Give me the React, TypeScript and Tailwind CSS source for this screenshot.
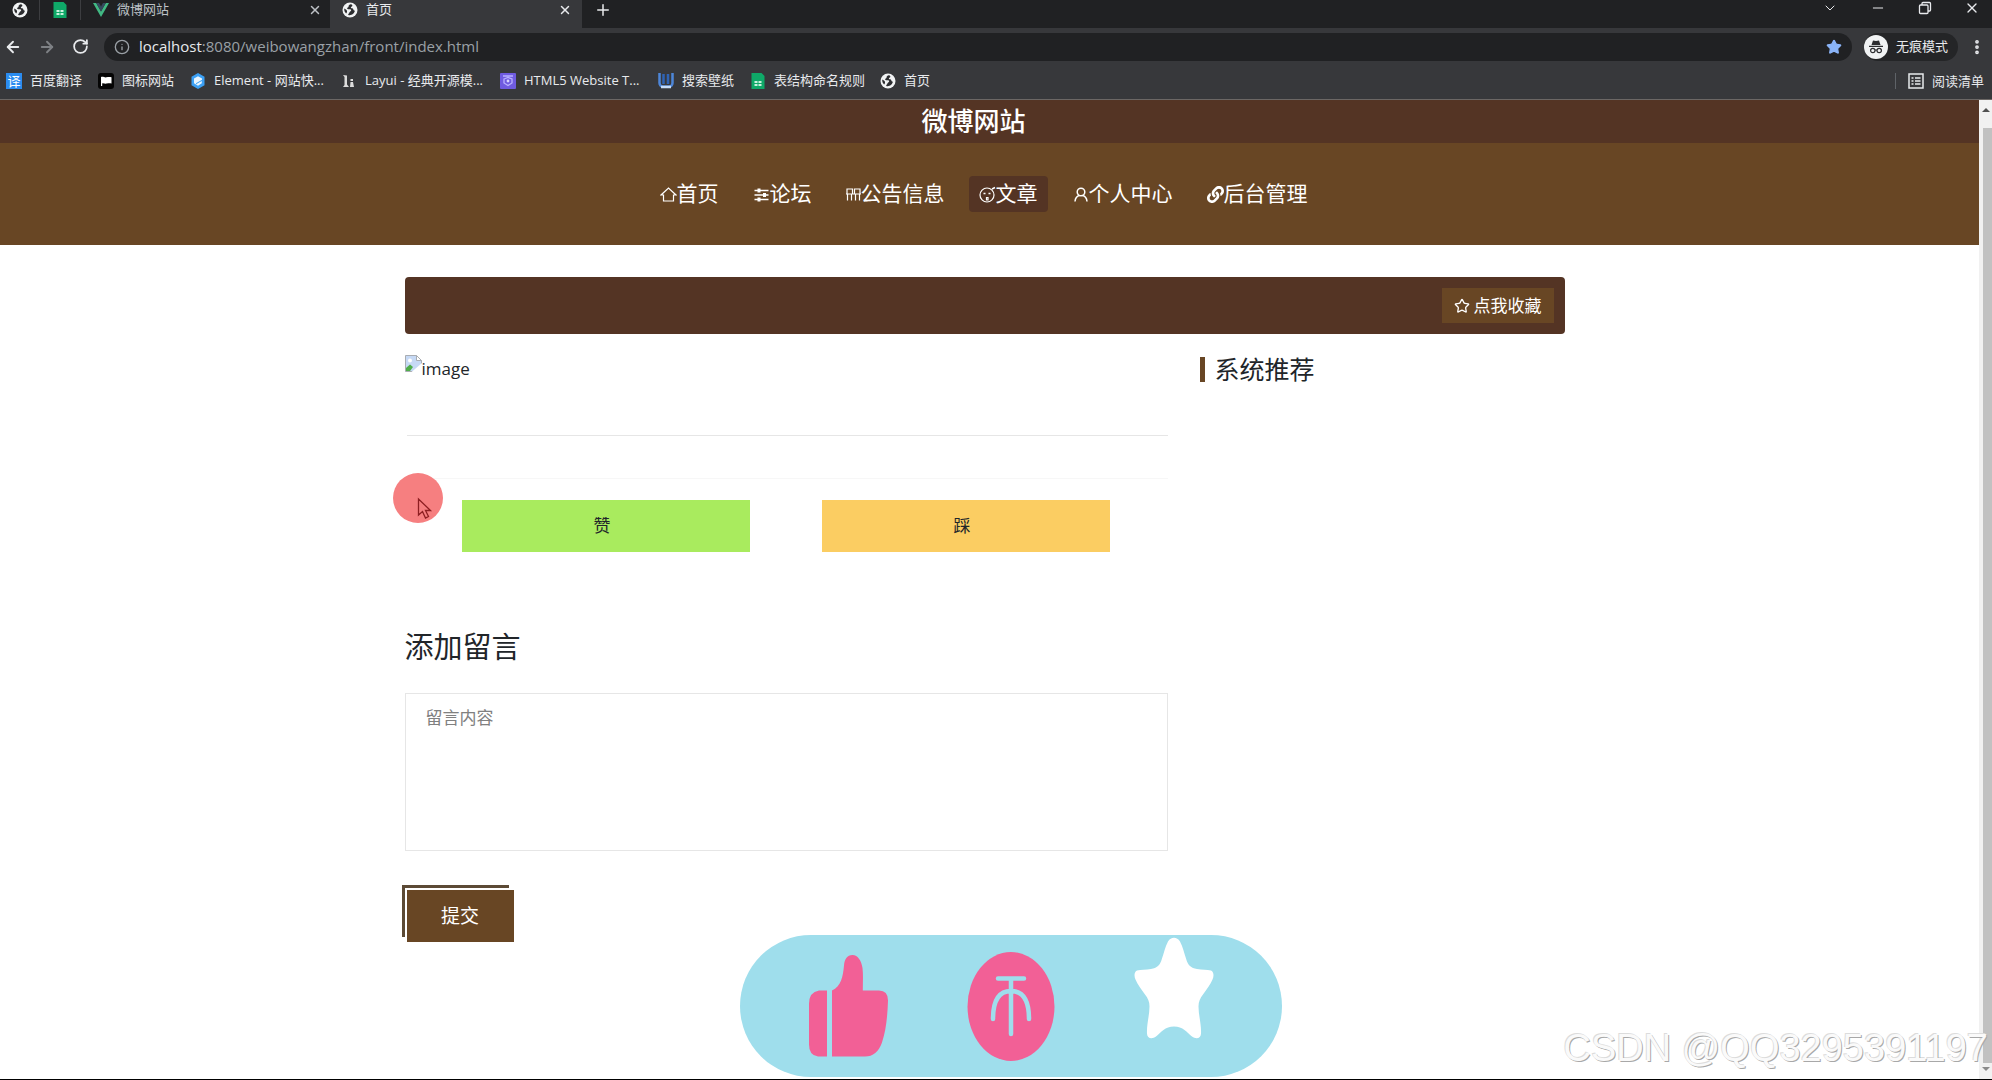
import type { ReactNode } from "react";
import {
  ArrowLeft,
  ArrowRight,
  ChevronDown,
  Info,
  Minus,
  MoreVertical,
  Plus,
  RotateCw,
  Star,
  X,
} from "lucide-react";
import { FaLink } from "react-icons/fa";

function GlobeIcon() {
  return (
    <svg viewBox="0 0 16 16" className="w-4 h-4 shrink-0">
      <circle cx="8" cy="8" r="7.5" fill="#f1f3f4" />
      <path d="M9 2.200c-1.800.3-2.600 1.300-2.400 2.200.2.800-1.600.9-1.500 2 .1 1 1.900.6 3.200.9 1.500.4.9 1.700-.1 2.100-.9.4-.7 1.500-1.600 2.300-.5.400-.7 1.300.300 1.500 2.700.400 5.700-1.700 6-4.600-1.100.2-1.600-.7-1.700-1.500-.2-1-1.900-.4-2.300-1.300-.3-.900 1-1.300 1.400-1.900.3-.6-.3-1.500-1.300-1.700z" fill="#2b2c2f" />
      <path d="M2.300 6.600c1 .8 2.400 1.200 2.700 2.300.2 1-.3 1.900-.9 2.500C2.600 10.300 2 8.400 2.300 6.600z" fill="#2b2c2f" />
    </svg>
  );
}

function SheetIcon() {
  return (
    <svg viewBox="0 0 16 16" className="w-4 h-4 shrink-0">
      <path d="M1.500 0h10l3 3v13h-13z" fill="#0fa968" />
      <path d="M4.500 8h3v2h-3zM8.500 8h3v2h-3zM4.500 11h3v2h-3zM8.500 11h3v2h-3z" fill="#c9f2de" />
    </svg>
  );
}

function VueIcon() {
  return (
    <svg viewBox="0 0 16 16" className="w-4 h-4 shrink-0">
      <path d="M0 1h3.200L8 9.500 12.800 1H16L8 15z" fill="#41b883" />
      <path d="M3.200 1H6l2 3.500L10 1h2.800L8 9.500z" fill="#35495e" />
    </svg>
  );
}

function TranslateIcon() {
  return (
    <span className="w-4 h-4 shrink-0 bg-[#2b8cf0] text-white text-[13px] leading-4 text-center">译</span>
  );
}

function FlagIcon() {
  return (
    <svg viewBox="0 0 16 16" className="w-4 h-4 shrink-0">
      <rect width="16" height="16" rx="3" fill="#050505" />
      <path d="M3 4c2-1 3.500.8 5.500.3 1.500-.4 3-.6 5-.1v6.300c-2-.5-3.200-.3-4.700.1-2 .5-3-.6-4.600-.2V13H3z" fill="#fff" />
    </svg>
  );
}

function ElementIcon() {
  return (
    <svg viewBox="0 0 16 16" className="w-4 h-4 shrink-0">
      <path d="M8 0l6.500 3.700v8.600L8 16l-6.500-3.700V3.700z" fill="#3ba0f5" />
      <path d="M8 3.200l4 2.300v1.300L6 10.300v1L11.800 8v2.300L8 12.700l-4-2.400V5.500z" fill="#e8f5ff" />
    </svg>
  );
}

function LayuiIcon() {
  return (
    <svg viewBox="0 0 16 16" className="w-4 h-4 shrink-0">
      <path d="M2 2l4 .5v9l2 2.500H2l1.500-2V4zM9.500 6H12v2H9.500zM9.500 9H12l1 5H9z" fill="#dcdcdc" />
    </svg>
  );
}

function TemplateIcon() {
  return (
    <svg viewBox="0 0 16 16" className="w-4 h-4 shrink-0">
      <rect width="16" height="16" rx="1" fill="#6f5be0" />
      <path d="M3 3h10M4 6l4-1.500L12 6v4l-4 2.500L4 10z" fill="none" stroke="#b9b2ff" strokeWidth="1.300" />
      <circle cx="8" cy="8" r="1.400" fill="#d9d5ff" />
    </svg>
  );
}

function WallpaperIcon() {
  return (
    <svg viewBox="0 0 16 16" className="w-4 h-4 shrink-0" fill="none" strokeWidth="2.500">
      <path d="M1.500 0v10c0 2 1.500 3.500 3.500 3.500h6c2 0 3.500-1.500 3.500-3.500V0" stroke="#4d86d9" />
      <path d="M5.500 1v10M10 1v10" stroke="#2f63b5" />
      <path d="M3 14h10" stroke="#c5dcf8" />
    </svg>
  );
}

function ReadingListIcon() {
  return (
    <svg viewBox="0 0 16 16" className="w-4 h-4 shrink-0" fill="none" stroke="#e8eaed">
      <rect x="1" y="1" width="14" height="14" strokeWidth="1.500" />
      <path d="M3.500 5h2M3.500 8h2M3.500 11h2M7 5h5.500M7 8h5.500M7 11h5.500" strokeWidth="1.500" />
    </svg>
  );
}

function RestoreIcon() {
  return (
    <svg viewBox="0 0 14 14" className="w-3.5 h-3.5" fill="none" stroke="currentColor" strokeWidth="1.300">
      <rect x="1.500" y="4" width="8.500" height="8.500" rx="1" />
      <path d="M4 4V2.500q0-1 1-1h6.500q1 0 1 1V9q0 1-1 1H10" />
    </svg>
  );
}

function IncognitoIcon() {
  return (
    <svg viewBox="0 0 24 24" className="w-6 h-6 shrink-0">
      <circle cx="12" cy="12" r="12" fill="#f1f3f4" />
      <path d="M9 5.500l3 .6 3-.6 1.500 4.500h-9zM5 10.800h14v1.200H5z" fill="#2b2c2f" />
      <circle cx="8.800" cy="15.500" r="2.200" fill="none" stroke="#2b2c2f" strokeWidth="1.200" />
      <circle cx="15.200" cy="15.500" r="2.200" fill="none" stroke="#2b2c2f" strokeWidth="1.200" />
      <path d="M11 15.200q1-.6 2 0" fill="none" stroke="#2b2c2f" />
    </svg>
  );
}

function NavGlyph({ children }: { children: ReactNode }) {
  return (
    <svg viewBox="0 0 17 17" className="h-[17px] w-[17px] shrink-0" fill="none" stroke="currentColor" strokeWidth="1.200">
      {children}
    </svg>
  );
}

const bookmarks = [
  { label: "百度翻译", icon: <TranslateIcon />, width: "w-[92px]" },
  { label: "图标网站", icon: <FlagIcon />, width: "w-[92px]" },
  { label: "Element - 网站快...", icon: <ElementIcon />, width: "w-[151px]" },
  { label: "Layui - 经典开源模...", icon: <LayuiIcon />, width: "w-[159px]" },
  { label: "HTML5 Website T...", icon: <TemplateIcon />, width: "w-[158px]" },
  { label: "搜索壁纸", icon: <WallpaperIcon />, width: "w-[92px]" },
  { label: "表结构命名规则", icon: <SheetIcon />, width: "w-[130px]" },
  { label: "首页", icon: <GlobeIcon />, width: "w-[60px]" },
];

const navItems = [
  {
    label: "首页",
    icon: (
      <NavGlyph>
        <path d="M1 9l7.500-7L16 9h-2.500v6h-10V9z" />
      </NavGlyph>
    ),
  },
  {
    label: "论坛",
    icon: (
      <NavGlyph>
        <path d="M1.500 4.500h14M1.500 9h14M1.500 13.500h14" strokeWidth="1.500" />
        <path d="M6 2.500v4M11.500 7v4M6 11.500v4" strokeWidth="3" />
      </NavGlyph>
    ),
  },
  {
    label: "公告信息",
    icon: (
      <svg viewBox="0 0 15 17" className="h-[17px] w-[15px] shrink-0" fill="none" stroke="currentColor" strokeWidth="1.200">
        <path d="M1 3h5.500v5H1zM8.500 3H14v5H8.500zM0 8h15M1.500 8v6.500M5.500 8v6.500M9.500 8v6.500M13.500 8v6.500" />
      </svg>
    ),
  },
  {
    label: "文章",
    active: true,
    icon: (
      <NavGlyph>
        <circle cx="8" cy="9" r="7" />
        <path d="M4.500 7.500h2M9.500 7.500h2M13 3l3-1.500" strokeWidth="1.500" />
        <path d="M7.500 11.500h1.500v2.500H7.500z" />
      </NavGlyph>
    ),
  },
  {
    label: "个人中心",
    icon: (
      <NavGlyph>
        <circle cx="9" cy="6" r="3.800" strokeWidth="1.500" />
        <path d="M3 15.500c.3-3.500 2-5.500 4.500-6M15 15.500c-.3-3.500-2-5.500-4.500-6" strokeWidth="1.500" />
      </NavGlyph>
    ),
  },
  { label: "后台管理", icon: <FaLink className="h-[17px] w-[17px] shrink-0" /> },
];

function BrowserChrome() {
  return (
    <header className="bg-[#37383b] border-b border-[#6b6765] text-[#e8eaed] text-[13px]">
      <div className="flex h-7 items-start bg-[#202123]">
        <div className="flex h-5 w-10 items-center justify-center border-r border-[#3c3d40]">
          <GlobeIcon />
        </div>
        <div className="flex h-5 w-[41px] items-center justify-center border-r border-[#3c3d40]">
          <SheetIcon />
        </div>
        <div className="flex h-5 w-[249px] items-center gap-2 pl-3 pr-2 text-[#bdc1c6]">
          <VueIcon />
          <span className="flex-1">微博网站</span>
          <button aria-label="关闭微博网站"><X className="w-3.5 h-3.5" strokeWidth={2.5} /></button>
        </div>
        <div className="flex h-7 w-[252px] items-center gap-2 bg-[#37383b] pb-2 pl-3 pr-2.5">
          <GlobeIcon />
          <span className="flex-1">首页</span>
          <button aria-label="关闭首页"><X className="w-3.5 h-3.5" strokeWidth={2.5} /></button>
        </div>
        <button aria-label="新标签页" className="flex h-5 items-center pl-3">
          <Plus className="w-[18px] h-[18px]" />
        </button>
        <div className="ml-auto flex h-4 items-center gap-8 pr-3">
          <button aria-label="搜索标签页"><ChevronDown className="w-4 h-4" strokeWidth={1.5} /></button>
          <button aria-label="最小化"><Minus className="w-4 h-4" strokeWidth={1.5} /></button>
          <button aria-label="还原"><RestoreIcon /></button>
          <button aria-label="关闭窗口"><X className="w-4 h-4" strokeWidth={2} /></button>
        </div>
      </div>
      <div className="flex h-[37px] items-center pl-1 pr-2">
        <button aria-label="后退" className="w-5"><ArrowLeft className="w-[18px] h-[18px]" strokeWidth={2.5} /></button>
        <button aria-label="前进" className="ml-[14px] w-5 text-[#7e8185]"><ArrowRight className="w-[18px] h-[18px]" strokeWidth={2.5} /></button>
        <button aria-label="刷新" className="ml-[14px] w-5"><RotateCw className="w-[17px] h-[17px]" strokeWidth={2.5} /></button>
        <div className="ml-3 flex h-7 flex-1 items-center rounded-full bg-[#202123] pl-2.5 pr-2.5">
          <Info className="w-4 h-4 text-[#9aa0a6]" />
          <span className="ml-[9px] flex-1 text-[15px] text-[#9aa0a6]">
            <span className="text-[#e8eaed]">localhost</span>:8080/weibowangzhan/front/index.html
          </span>
          <button aria-label="收藏"><Star className="w-4 h-4 fill-[#8ab4f8] text-[#8ab4f8]" /></button>
        </div>
        <div className="ml-3 flex h-7 items-center gap-2 rounded-full bg-[#242527] pr-2.5">
          <IncognitoIcon />
          <span>无痕模式</span>
        </div>
        <button aria-label="菜单" className="ml-2.5 w-4"><MoreVertical className="w-[18px] h-[18px]" strokeWidth={3} /></button>
      </div>
      <nav className="flex h-[34px] items-center pl-1.5 pr-2 pb-0.5">
        {bookmarks.map((b) => (
          <a key={b.label} href="#" className={`flex items-center gap-2 whitespace-nowrap ${b.width}`}>
            {b.icon}
            {b.label}
          </a>
        ))}
        <a href="#" className="ml-auto flex items-center gap-2 border-l border-[#5f6368] pl-3 leading-4">
          <ReadingListIcon />
          阅读清单
        </a>
      </nav>
    </header>
  );
}

function SiteHeader() {
  return (
    <header className="bg-[#684624] text-white">
      <div className="flex h-[43px] items-center justify-center bg-[#543424] pr-8">
        <h1 className="text-[26px] font-medium leading-[43px]">微博网站</h1>
      </div>
      <nav className="flex h-[102px] items-center justify-center gap-3.5 pr-3">
        {navItems.map((item) => (
          <a
            key={item.label}
            href="#"
            className={`flex h-9 items-center rounded px-2.5 text-[21px] ${item.active ? "bg-[#543424]" : ""}`}
          >
            {item.icon}
            {item.label}
          </a>
        ))}
      </nav>
    </header>
  );
}

function BrokenImage() {
  return (
    <div role="img" aria-label="image" className="flex h-[27px] items-center">
      <svg viewBox="0 0 17 17" className="w-[17px] h-[17px] self-start">
        <path d="M.5.500h11l5 5v11H.5z" fill="#c6d9f5" stroke="#a9adb2" />
        <path d="M11.500.500v5h5z" fill="#fff" stroke="#a9adb2" />
        <circle cx="5" cy="5.500" r="2" fill="#fff" />
        <path d="M1 16v-3l4-3.500 3 2.500L5 16z" fill="#4fae4a" />
        <path d="M6.500 17L17 8v9z" fill="#fff" />
      </svg>
      <span className="text-[17px]">image</span>
    </div>
  );
}

function Article() {
  return (
    <main className="mx-auto w-full max-w-[1160px] pt-8 text-[#212529]">
      <div className="flex h-[57px] items-center justify-end rounded bg-[#543424] pr-[11px]">
        <button className="flex h-[35px] items-center gap-1 bg-[#684624] px-3 text-[17px] text-white">
          <Star className="w-4 h-4" strokeWidth={2} />
          点我收藏
        </button>
      </div>
      <div className="flex gap-8 pt-[21px]">
        <section className="flex-1">
          <BrokenImage />
          <hr className="mt-[53px] ml-0.5 border-[#e6e6e6]" />
          <div className="mt-[42px] flex justify-center gap-[72px] border-t border-[#f7f7f7] pt-[21px] text-[17px]">
            <button className="h-[52px] w-72 bg-[#a9eb5e] pr-2">赞</button>
            <button className="h-[52px] w-72 bg-[#fbcd62] pr-2">踩</button>
          </div>
          <form>
            <label htmlFor="message" className="mt-[73px] block text-[29px] leading-[44px]">添加留言</label>
            <textarea
              id="message"
              placeholder="留言内容"
              className="mt-6 block h-[158px] w-full resize-none border border-[#e6e6e6] px-5 py-3 text-[17px] leading-6 placeholder:text-[#808080]"
            />
            <button
              type="button"
              className="mt-[39px] ml-0.5 h-[52px] w-[107px] bg-[#684624] text-[19px] text-white shadow-[0_0_0_2px_#fff,-5px_-5px_0_0_#5c4a35]"
            >
              提交
            </button>
          </form>
        </section>
        <aside className="w-[365px]">
          <h2 className="flex items-center gap-2.5 text-[25px] leading-7">
            <span className="h-[25px] w-[5px] bg-[#684624]" />
            系统推荐
          </h2>
        </aside>
      </div>
    </main>
  );
}

function ReactionBar() {
  return (
    <div className="absolute bottom-0.5 left-[740px] flex h-[142px] w-[542px] rounded-full bg-[#9fdeec]">
      <svg viewBox="0 0 542 142" className="h-full w-full">
        <g fill="#f26096">
          <path d="M87 121.500h-9q-9-1-9-12V69q0-12 10-13.500h8z" />
          <path d="M92 121.500V55.500c9-4 11-14 12-25 .5-6 3-10.500 8.500-10.500s9 6 10 13c.8 7 .3 14 .3 22.500H139q9 0 9 10c-.5 16-2 30-6 42q-5 14-17 14z" />
          <ellipse cx="271" cy="71.500" rx="43.500" ry="54.500" />
        </g>
        <path d="M258 43.500h26M271 44v55M253 84c0-18 6-28 18-28s18 10 18 28" fill="none" stroke="#9fdeec" strokeWidth="4.500" strokeLinecap="round" />
        <path
          d="M428 6.500c3-5 9-5 12 0 3 6 4 11 6 17 2 7 5 9.500 11 10.500 5 1 10 .5 14 1.500 3 1.500 3 6 1.500 9-2 5-6 10-9.500 15-3 4-4.500 7-4.500 12 0 9 3 18 2.500 27 0 5-5 6-9 3-5-4-9-10-18-10s-13 6-18 10c-4 3-9 2-9-3-.5-9 2.500-18 2.500-27 0-5-1.500-8-4.500-12-3.500-5-7.500-10-9.500-15-1.500-3-1.500-7.500 1.500-9 4-1 9-.5 14-1.500 6-1 9-3.500 11-10.500 2-6 3-11 6-17z"
          fill="#fff"
        />
      </svg>
    </div>
  );
}

function Pointer() {
  return (
    <div className="absolute top-[473px] left-[393px] h-[50px] w-[50px] rounded-full bg-[#f67f80]">
      <svg viewBox="0 0 50 50" className="h-full w-full">
        <path d="M25.500 26v16l4-3.500 3 6.500 3-1.500-3-6h5z" fill="#f67f80" stroke="#8e1f22" strokeWidth="1.300" />
      </svg>
    </div>
  );
}

function ScrollRail() {
  return (
    <div className="flex w-[13px] flex-col items-center justify-between bg-[#f1f1f1] py-2">
      <span className="border-x-4 border-b-4 border-x-transparent border-b-[#505050]" />
      <div className="mt-4 mb-1 ml-1 w-[9px] flex-1 bg-[#c1c1c1]" />
      <span className="border-x-4 border-t-4 border-x-transparent border-t-[#8a8a8a]" />
    </div>
  );
}

export default function App() {
  return (
    <div className="relative flex min-h-screen flex-col overflow-hidden border-b border-black bg-white font-['Open_Sans','Noto_Sans_CJK_SC',sans-serif]">
      <BrowserChrome />
      <div className="flex flex-1">
        <div className="flex-1">
          <SiteHeader />
          <div className="pr-2.5">
            <Article />
          </div>
        </div>
        <ScrollRail />
      </div>
      <ReactionBar />
      <Pointer />
      <p className="absolute right-1 bottom-1.5 font-['Liberation_Sans',sans-serif] text-[38px] leading-[50px] text-[#fafafa] [text-shadow:1px_1px_0_#a8a8a8,-1px_-1px_0_#dcdcdc]">
        CSDN @QQ3295391197
      </p>
    </div>
  );
}
